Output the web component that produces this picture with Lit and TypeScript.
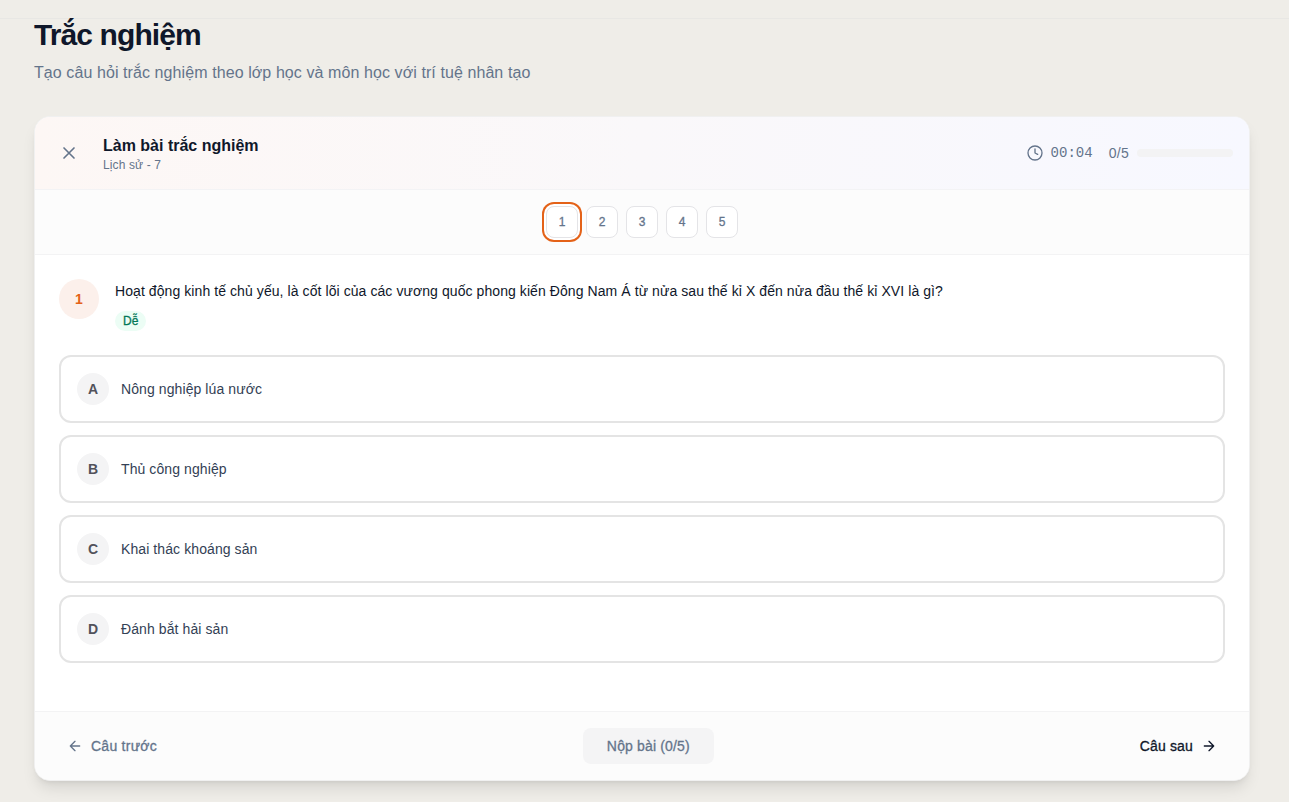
import { LitElement, html, css } from "lit";
import { customElement, state } from "lit/decorators.js";
import { classMap } from "lit/directives/class-map.js";

const OPTIONS = [
  ["A", "Nông nghiệp lúa nước"],
  ["B", "Thủ công nghiệp"],
  ["C", "Khai thác khoáng sản"],
  ["D", "Đánh bắt hải sản"],
];

@customElement("app-root")
export class AppRoot extends LitElement {
  @state() current = 1;

  static styles = css`
    :host {
      display: block;
      height: 802px;
      overflow: hidden;
      background: #efede8;
      font-family: "Liberation Sans", Arial, sans-serif;
      color: #0f172a;
    }
    * { box-sizing: border-box; }
    h1, h2, p { margin: 0; }
    button { font: inherit; color: inherit; letter-spacing: inherit; background: none; border: 0; padding: 0; white-space: nowrap; }
    svg { display: block; fill: none; stroke: currentColor; stroke-width: 2; stroke-linecap: round; stroke-linejoin: round; flex: none; }
    .topbar { height: 19px; border-bottom: 1px solid #e8e7e4; }
    .page { padding: 0 39px 0 34px; }
    h1 { font-size: 30px; line-height: 36px; font-weight: 700; letter-spacing: -0.9px; margin-top: -2px; }
    .sub { font-size: 16px; line-height: 24px; letter-spacing: 0.085px; color: #64748b; margin-top: 8px; margin-bottom: 31px; }
    .card {
      height: 665px;
      border: 1px solid #f0f0f0;
      border-radius: 16px;
      background: #fff;
      overflow: hidden;
      display: flex;
      flex-direction: column;
      box-shadow: 0 10px 15px -3px rgba(0, 0, 0, 0.1), 0 4px 6px -4px rgba(0, 0, 0, 0.1);
    }
    .head {
      height: 73px;
      display: flex;
      align-items: center;
      padding: 0 16px;
      border-bottom: 1px solid #f3f3f5;
      background: linear-gradient(90deg, #fdf7f5, #faf8fa 50%, #f7f8ff);
    }
    .close { width: 36px; height: 36px; display: grid; place-items: center; color: #64748b; }
    .titles { margin-left: 16px; flex: 1; }
    h2 { font-size: 16px; line-height: 22px; padding-top: 2px; font-weight: 700; }
    .meta { font-size: 12px; line-height: 16px; letter-spacing: 0.12px; color: #64748b; }
    .stats { display: flex; align-items: center; color: #64748b; font-size: 14px; line-height: 20px; }
    .time { font-family: "Liberation Mono", monospace; margin: 0 16px 0 8px; }
    .count { letter-spacing: 0.3px; }
    .bar { width: 96px; height: 8px; border-radius: 4px; background: #f3f3f4; margin-left: 8px; }
    .nav {
      height: 65px;
      display: flex;
      justify-content: center;
      align-items: center;
      gap: 8px;
      background: #fcfcfc;
      border-bottom: 1px solid #f3f3f4;
    }
    .num { width: 32px; height: 32px; border: 1px solid #e4e4e7; border-radius: 8px; background: #fff; color: #64748b; font-size: 12px; -webkit-text-stroke: 0.3px; }
    .num.active { box-shadow: 0 0 0 2px #fff, 0 0 0 4px #e46218; }
    .body { flex: 1; padding: 24px; background: #fff; }
    .question { display: flex; gap: 16px; height: 76px; }
    .index { width: 40px; height: 40px; border-radius: 50%; background: #fcf0eb; color: #e46218; font-size: 14px; font-weight: 700; display: grid; place-items: center; }
    .text { font-size: 14px; line-height: 23px; padding-top: 1px; letter-spacing: 0.078px; color: #0f172a; white-space: nowrap; }
    .badge { display: inline-block; height: 20px; padding: 0 8px; margin-top: 8px; border-radius: 10px; background: #ecfdf5; color: #047857; font-size: 12px; line-height: 20px; -webkit-text-stroke: 0.3px; }
    .options { display: grid; gap: 12px; }
    .option { height: 68px; display: flex; align-items: center; gap: 12px; padding: 0 16px; border: 2px solid #e4e4e4; border-radius: 12px; background: #fff; color: #334155; font-size: 14px; letter-spacing: 0.09px; text-align: left; }
    .letter { width: 32px; height: 32px; border-radius: 50%; background: #f4f4f5; color: #52525b; font-weight: 700; display: grid; place-items: center; }
    .foot {
      height: 69px;
      display: flex;
      align-items: center;
      justify-content: space-between;
      padding: 0 32px;
      border-top: 1px solid #f3f3f4;
      background: #fcfcfc;
      font-size: 14px;
      letter-spacing: 0.16px;
      -webkit-text-stroke: 0.3px;
    }
    .step { display: flex; align-items: center; gap: 8px; }
    .prev { color: #64748b; letter-spacing: 0.26px; }
    .submit { width: 131px; height: 36px; border-radius: 8px; background: #f4f4f5; color: #64748b; }
  `;

  render() {
    return html`
      <div class="topbar"></div>
      <main class="page">
        <h1>Trắc nghiệm</h1>
        <p class="sub">Tạo câu hỏi trắc nghiệm theo lớp học và môn học với trí tuệ nhân tạo</p>
        <section class="card">
          <header class="head">
            <button class="close" aria-label="Đóng">
              <svg width="20" height="20" viewBox="0 0 24 24"><path d="M18 6 6 18M6 6l12 12" /></svg>
            </button>
            <div class="titles">
              <h2>Làm bài trắc nghiệm</h2>
              <p class="meta">Lịch sử - 7</p>
            </div>
            <div class="stats">
              <svg width="16" height="16" viewBox="0 0 24 24"><circle cx="12" cy="12" r="10.5" /><path d="M12 6v6l4 2" /></svg>
              <span class="time">00:04</span>
              <span class="count">0/5</span>
              <div class="bar"></div>
            </div>
          </header>
          <nav class="nav">
            ${[1, 2, 3, 4, 5].map(
              (n) => html`<button class=${classMap({ num: true, active: n === this.current })} @click=${() => (this.current = n)}>${n}</button>`
            )}
          </nav>
          <div class="body">
            <div class="question">
              <div class="index">1</div>
              <div>
                <p class="text">Hoạt động kinh tế chủ yếu, là cốt lõi của các vương quốc phong kiến Đông Nam Á từ nửa sau thế kỉ X đến nửa đầu thế kỉ XVI là gì?</p>
                <span class="badge">Dễ</span>
              </div>
            </div>
            <div class="options">
              ${OPTIONS.map(([k, t]) => html`<button class="option"><span class="letter">${k}</span><span>${t}</span></button>`)}
            </div>
          </div>
          <footer class="foot">
            <button class="step prev">
              <svg width="16" height="16" viewBox="0 0 24 24"><path d="m12 19-7-7 7-7M19 12H5" /></svg>
              <span>Câu trước</span>
            </button>
            <button class="submit">Nộp bài (0/5)</button>
            <button class="step next">
              <span>Câu sau</span>
              <svg width="16" height="16" viewBox="0 0 24 24"><path d="M5 12h14M12 5l7 7-7 7" /></svg>
            </button>
          </footer>
        </section>
      </main>
    `;
  }
}
